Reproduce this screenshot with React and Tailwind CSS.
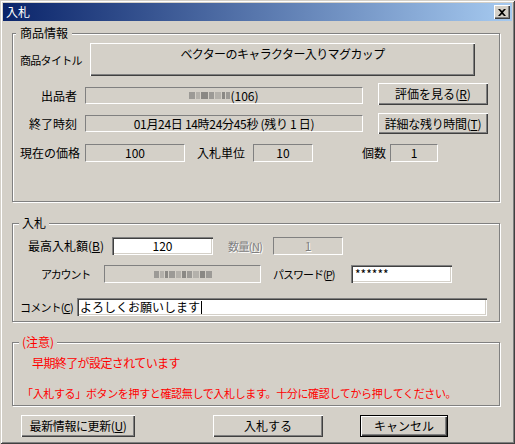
import clsx from "clsx";

const raised =
  "shadow-[inset_1px_1px_0_#fff,inset_-1px_-1px_0_#404040,inset_-2px_-2px_0_#808080]";
const staticEdge =
  "border border-t-[#808080] border-l-[#808080] border-r-white border-b-white";
const sunken =
  "bg-white shadow-[inset_1px_1px_0_#808080,inset_2px_2px_0_#404040,inset_-1px_-1px_0_#fff,inset_-2px_-2px_0_#d4d0c8]";

const Button = ({ className, children, isDefault }) => (
  <div
    className={clsx(
      "flex justify-center bg-[#d4d0c8] leading-[14px] shrink-0",
      isDefault ? "border border-black" : "",
      raised,
      className
    )}
  >
    {children}
  </div>
);

const Field = ({ className, children }) => (
  <div
    className={clsx(
      "flex items-center justify-center leading-[14px] shrink-0",
      staticEdge,
      className
    )}
  >
    {children}
  </div>
);

const Input = ({ className, children }) => (
  <div className={clsx("flex items-center leading-[14px] shrink-0", sunken, className)}>
    {children}
  </div>
);

const Group = ({ label, labelClass, className, children }) => (
  <div
    className={clsx(
      "relative w-[488px] border border-[#808080] shadow-[inset_1px_1px_0_#fff,1px_1px_0_#fff]",
      className
    )}
  >
    <span
      className={clsx(
        "absolute top-[-8px] h-[14px] leading-[14px] bg-[#d4d0c8]",
        labelClass
      )}
    >
      {label}
    </span>
    {children}
  </div>
);

const Key = ({ k }) => (
  <>
    (<span className="underline underline-offset-[1px]">{k}</span>)
  </>
);

const Blur = ({ widths }) => (
  <span className="inline-flex items-center gap-[1px] h-[8px]">
    {widths.map((w, i) => (
      <span
        key={i}
        className={clsx(
          "h-[7px]",
          i % 3 === 0 ? "bg-[#9c9a96]" : i % 3 === 1 ? "bg-[#b4b1ab]" : "bg-[#8a8884]"
        )}
        style={{ width: w }}
      />
    ))}
  </span>
);

const disabledText = "text-[#808080] [text-shadow:1px_1px_0_#fff]";

export default function App() {
  return (
    <div className="w-[515px] h-[444px] bg-[#d4d0c8] p-[3px] flex flex-col whitespace-nowrap text-[12px] text-black font-['Noto_Sans_CJK_JP',sans-serif] shadow-[inset_1px_1px_0_#d4d0c8,inset_-1px_-1px_0_#404040,inset_2px_2px_0_#fff,inset_-2px_-2px_0_#808080]">
      {/* title bar */}
      <div className="h-[18px] flex items-center justify-between bg-[linear-gradient(to_right,#0a246a,#a6caf0)] pl-[3px] pr-[2px]">
        <span className="text-white leading-[14px]">入札</span>
        <div className={clsx("w-[16px] h-[14px] bg-[#d4d0c8] flex items-center justify-center", raised)}>
          <svg width="8" height="7" viewBox="0 0 8 7">
            <path d="M0 0h2l2 2 2-2h2L5 3.5 8 7H6L4 5 2 7H0l3-3.5z" fill="#000" />
          </svg>
        </div>
      </div>

      <div className="flex flex-col px-[9px] pt-[12px]">
        {/* 商品情報 */}
        <Group label="商品情報" labelClass="left-[3px] px-[4px]" className="h-[169px]">
          <div className="flex flex-col pl-[7px] pt-[9px]">
            <div className="flex h-[33px]">
              <div className="w-[70px] flex items-center leading-[14px] text-[11px] tracking-[-0.7px]">
                商品タイトル
              </div>
              <Button className="w-[385px] h-[33px] pt-[4px] tracking-[-0.6px]">
                ベクターのキャラクター入りマグカップ
              </Button>
            </div>

            <div className="mt-[7px] flex h-[22px]">
              <div className="w-[65px] pr-[8px] text-right mt-[4px] leading-[17px]">出品者</div>
              <Field className="w-[278px] h-[17px] mt-[4px]">
                <Blur widths={[6, 4, 7, 5, 6, 3, 4]} />
                <span>(106)</span>
              </Field>
              <Button className="w-[110px] h-[22px] ml-[15px] items-center">
                評価を見る<Key k="R" />
              </Button>
            </div>

            <div className="mt-[8px] flex h-[21px]">
              <div className="w-[65px] pr-[8px] text-right mt-[2px] leading-[17px]">終了時刻</div>
              <Field className="w-[278px] h-[17px] mt-[2px] tracking-[-0.3px]">
                01月24日 14時24分45秒 (残り 1 日)
              </Field>
              <Button className="w-[110px] h-[21px] ml-[15px] items-center tracking-[-0.3px]">
                詳細な残り時間<Key k="T" />
              </Button>
            </div>

            <div className="mt-[10px] flex h-[18px] items-center">
              <div className="w-[65px] leading-[14px]">現在の価格</div>
              <Field className="w-[100px] h-[18px]">100</Field>
              <div className="ml-[12px] w-[56px] leading-[14px]">入札単位</div>
              <Field className="w-[60px] h-[18px]">10</Field>
              <div className="ml-[49px] w-[28px] leading-[14px]">個数</div>
              <Field className="w-[48px] h-[18px]">1</Field>
            </div>
          </div>
        </Group>

        {/* 入札 */}
        <Group label="入札" labelClass="left-[6px] px-[3px]" className="h-[99px] mt-[21px]">
          <div className="flex flex-col pt-[13px]">
            <div className="flex h-[18px] items-center">
              <div className="w-[99px] pr-[8px] text-right leading-[14px]">
                最高入札額<Key k="B" />
              </div>
              <Input className="w-[101px] h-[18px] justify-center">120</Input>
              <div className={clsx("ml-[15px] w-[45px] leading-[14px] text-[11px] tracking-[-0.6px]", disabledText)}>
                数量<Key k="N" />
              </div>
              <Field className={clsx("w-[70px] h-[18px]", disabledText)}>1</Field>
            </div>

            <div className="mt-[10px] flex h-[18px] items-center">
              <div className="w-[91px] pr-[14px] text-right leading-[14px] text-[11px] tracking-[-1.2px]">
                アカウント
              </div>
              <Field className="w-[157px] h-[18px]">
                <Blur widths={[5, 4, 3, 6, 5, 4, 5, 6, 5, 6]} />
              </Field>
              <div className="ml-[12px] w-[78px] leading-[14px] text-[11px] tracking-[-1px]">
                パスワード<Key k="P" />
              </div>
              <Input className="w-[101px] h-[18px] pl-[4px]">******</Input>
            </div>

            <div className="mt-[15px] flex h-[18px] items-center">
              <div className="w-[64px] pl-[7px] leading-[14px] text-[11px] tracking-[-0.8px]">
                コメント<Key k="C" />
              </div>
              <Input className="w-[410px] h-[18px] pl-[3px]">
                よろしくお願いします
                <span className="w-[1px] h-[13px] bg-black ml-[1px]" />
              </Input>
            </div>
          </div>
        </Group>

        {/* 注意 */}
        <Group
          label="(注意)"
          labelClass="left-[6px] px-[3px] text-[#ff0000]"
          className="h-[64px] mt-[20px]"
        >
          <div className="flex flex-col text-[#ff0000] leading-[14px]">
            <div className="pt-[13px] pl-[19px] tracking-[-0.6px]">早期終了が設定されています</div>
            <div className="mt-[16px] pl-[9px] text-[11px] tracking-[-0.35px]">
              「入札する」ボタンを押すと確認無しで入札します。十分に確認してから押してください。
            </div>
          </div>
        </Group>

        {/* buttons */}
        <div className="mt-[9px] flex h-[22px]">
          <Button className="ml-[9px] w-[114px] h-[22px] items-center tracking-[-0.4px]">
            最新情報に更新<Key k="U" />
          </Button>
          <Button className="ml-[78px] w-[110px] h-[22px] items-center">入札する</Button>
          <Button isDefault className="ml-[37px] w-[88px] h-[22px] items-center">
            キャンセル
          </Button>
        </div>
      </div>
    </div>
  );
}
